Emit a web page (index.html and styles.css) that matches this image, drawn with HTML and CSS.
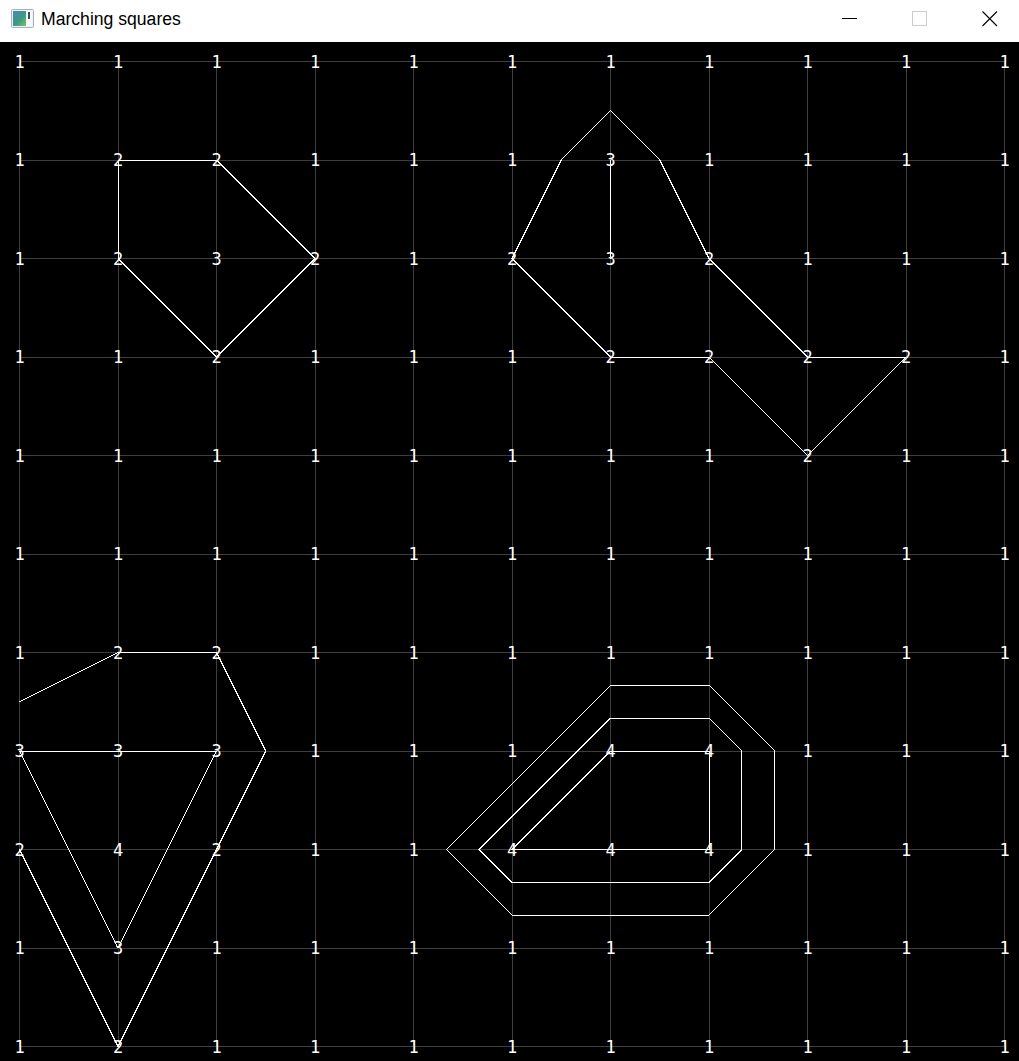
FILE: index.html
```html
<!DOCTYPE html>
<html>
<head>
<meta charset="utf-8">
<title>Marching squares</title>
<link rel="stylesheet" href="styles.css">
</head>
<body>
<div class="window">
  <div class="titlebar">
    <svg class="app-icon" width="23" height="19" viewBox="0 0 23 19">
      <defs>
        <linearGradient id="ig" x1="0" y1="0" x2="1" y2="1">
          <stop offset="0" stop-color="#4f86b6"/>
          <stop offset="0.55" stop-color="#3b9a84"/>
          <stop offset="1" stop-color="#7cbf6c"/>
        </linearGradient>
      </defs>
      <rect x="0.5" y="0.5" width="22" height="18" rx="1" fill="#eef1f3" stroke="#aab2b9"/>
      <rect x="2" y="2" width="13" height="15" fill="url(#ig)"/>
      <rect x="15" y="2" width="6" height="15" fill="#f7f9fa"/>
      <rect x="17" y="3" width="2" height="7" fill="#35505f"/>
    </svg>
    <span class="title">Marching squares</span>
    <div class="controls">
      <div class="ctrl">
        <svg width="16" height="16" viewBox="0 0 16 16"><line x1="0" y1="7.5" x2="15" y2="7.5" stroke="#000" stroke-width="1"/></svg>
      </div>
      <div class="ctrl">
        <svg width="16" height="16" viewBox="0 0 16 16"><rect x="0.5" y="0.5" width="14" height="14" fill="none" stroke="#cccccc" stroke-width="1"/></svg>
      </div>
      <div class="ctrl">
        <svg width="16" height="16" viewBox="0 0 16 16"><path d="M0.5 0.5 L15 15 M15 0.5 L0.5 15" stroke="#000" stroke-width="1.1" fill="none"/></svg>
      </div>
    </div>
  </div>
  <svg class="canvas" width="1019" height="1019" viewBox="0 0 1019 1019">
    <g class="grid" transform="translate(19.5 19.5) scale(98.5)">
      <path vector-effect="non-scaling-stroke" d="M0 0H10M0 1H10M0 2H10M0 3H10M0 4H10M0 5H10M0 6H10M0 7H10M0 8H10M0 9H10M0 10H10M0 0V10M1 0V10M2 0V10M3 0V10M4 0V10M5 0V10M6 0V10M7 0V10M8 0V10M9 0V10M10 0V10"/>
    </g>
    <g class="contours" transform="translate(19.5 19.5) scale(98.5)">
      <polygon vector-effect="non-scaling-stroke" points="1,1 2,1 3,2 2,3 1,2"/>
      <polygon vector-effect="non-scaling-stroke" points="5,2 5.5,1 6,0.5 6.5,1 7,2 8,3 9,3 8,4 7,3 6,3"/>
      <polyline vector-effect="non-scaling-stroke" points="6,1 6,2"/>
      <polyline vector-effect="non-scaling-stroke" points="0,6.5 1,6 2,6 2.5,7 1,10 0,8"/>
      <polygon vector-effect="non-scaling-stroke" points="0,7 1,7 2,7 1,9"/>
      <polygon vector-effect="non-scaling-stroke" points="6,7 7,7 7,8 5,8"/>
      <polygon vector-effect="non-scaling-stroke" points="6,6.667 7,6.667 7.333,7 7.333,8 7,8.333 5,8.333 4.667,8"/>
      <polygon vector-effect="non-scaling-stroke" points="6,6.333 7,6.333 7.667,7 7.667,8 7,8.667 5,8.667 4.333,8"/>
    </g>
    <g class="values">
      <text x="19.5 118 216.5 315 413.5 512 610.5 709 807.5 906 1004.5" y="19.5">11111111111</text>
      <text x="19.5 118 216.5 315 413.5 512 610.5 709 807.5 906 1004.5" y="118">12211131111</text>
      <text x="19.5 118 216.5 315 413.5 512 610.5 709 807.5 906 1004.5" y="216.5">12321232111</text>
      <text x="19.5 118 216.5 315 413.5 512 610.5 709 807.5 906 1004.5" y="315">11211122221</text>
      <text x="19.5 118 216.5 315 413.5 512 610.5 709 807.5 906 1004.5" y="413.5">11111111211</text>
      <text x="19.5 118 216.5 315 413.5 512 610.5 709 807.5 906 1004.5" y="512">11111111111</text>
      <text x="19.5 118 216.5 315 413.5 512 610.5 709 807.5 906 1004.5" y="610.5">12211111111</text>
      <text x="19.5 118 216.5 315 413.5 512 610.5 709 807.5 906 1004.5" y="709">33311144111</text>
      <text x="19.5 118 216.5 315 413.5 512 610.5 709 807.5 906 1004.5" y="807.5">24211444111</text>
      <text x="19.5 118 216.5 315 413.5 512 610.5 709 807.5 906 1004.5" y="906">13111111111</text>
      <text x="19.5 118 216.5 315 413.5 512 610.5 709 807.5 906 1004.5" y="1004.5">12111111111</text>
    </g>
  </svg>
</div>
</body>
</html>
```
FILE: styles.css
```css
html, body {
  margin: 0;
  padding: 0;
  background: #000;
  overflow: hidden;
}
.window {
  width: 1019px;
  height: 1061px;
  display: flex;
  flex-direction: column;
}
.titlebar {
  height: 42px;
  flex: 0 0 42px;
  background: #fff;
  display: flex;
  align-items: center;
  overflow: hidden;
}
.app-icon {
  margin-left: 11px;
  margin-top: -6px;
  flex: 0 0 auto;
}
.title {
  margin-left: 7px;
  margin-top: -4px;
  font-family: "Liberation Sans", Arial, sans-serif;
  font-size: 17.6px;
  color: #000;
}
.controls {
  margin-left: auto;
  margin-right: -6px;
  display: flex;
  height: 100%;
}
.ctrl {
  width: 70px;
  display: flex;
  align-items: center;
  justify-content: center;
  padding-bottom: 4px;
  box-sizing: border-box;
}
.ctrl svg {
  display: block;
}
.canvas {
  display: block;
  background: #000;
}
.grid path {
  stroke: #3e3e3e;
  stroke-width: 1;
  fill: none;
  shape-rendering: crispEdges;
}
.contours polygon,
.contours polyline {
  stroke: #ffffff;
  stroke-width: 1;
  fill: none;
  shape-rendering: crispEdges;
}
.values text {
  fill: #ffffff;
  font-family: "DejaVu Sans Mono", "Liberation Mono", monospace;
  font-size: 17px;
  text-anchor: middle;
  dominant-baseline: central;
}
```
